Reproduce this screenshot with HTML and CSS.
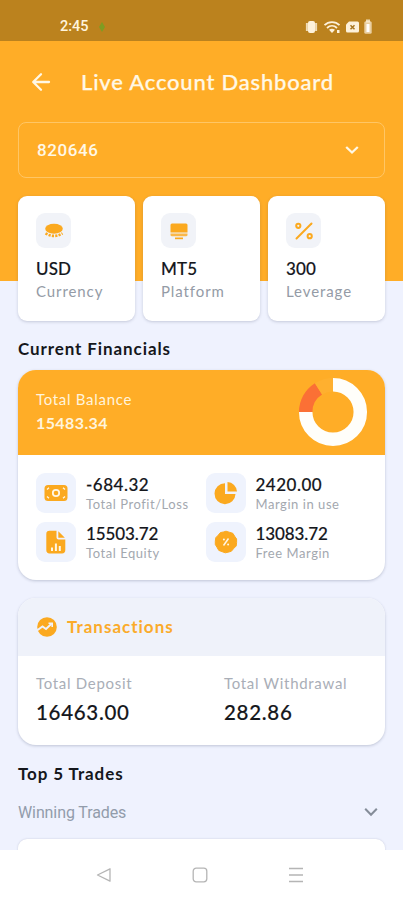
FILE: index.html
```html
<!DOCTYPE html>
<html lang="en">

<head>
  <meta charset="utf-8">
  <meta name="viewport" content="width=device-width, initial-scale=1">
  <title>Live Account Dashboard</title>
  <link rel="stylesheet" href="styles.css">
</head>

<body>
  <div class="screen">
    <div class="status-bar">
      <span class="clock">2:45</span>
      <svg class="leaf" width="8" height="12" viewBox="0 0 8 12"><path d="M4 1L7 6L4 11L1 6Z" fill="#7f9c22"/></svg>
      <!-- vibrate, wifi, sim, battery -->
      <svg class="status-icons" width="68" height="18" viewBox="0 0 68 18" fill="#fdf1da">
        <rect x="3" y="3" width="7" height="12" rx="2"/>
        <path d="M1.900 5V13M11.100 5V13" stroke="#fdf1da" stroke-width="2" opacity=".8"/>
        <g fill="none" stroke="#fdf1da" stroke-width="1.8">
          <path d="M19.5 7.2C23.500 3 30.500 3 34.500 7.200"/>
          <path d="M22 10C25 7.200 29 7.200 32 10"/>
        </g>
        <path d="M24 11.800Q27 9.600 30 11.800L27 15Z"/>
        <rect x="32" y="12" width="2.500" height="3"/>
        <path d="M44 3.500H52.500Q54 3.500 54 5V13Q54 14.500 52.500 14.500H42.500Q41 14.500 41 13V6.500Z"/>
        <path d="M45.500 7.300L49.500 11.300M49.500 7.300L45.500 11.300" stroke="#a9761f" stroke-width="1.500"/>
        <rect x="61" y="1.500" width="4" height="3" opacity=".8"/>
        <rect x="59.300" y="3.300" width="7.400" height="12.400" rx="1.500" opacity=".7"/>
        <rect x="61.500" y="6" width="3" height="8" fill="#fff"/>
      </svg>
    </div>

    <main class="content">
      <header class="title-bar">
        <svg width="20" height="20" viewBox="0 0 20 20" fill="none" stroke="#fff8e6" stroke-width="2.300" stroke-linecap="round" stroke-linejoin="round">
          <path d="M18 10H2.500M10 2.200L2.200 10L10 17.800"/>
        </svg>
        <h1>Live Account Dashboard</h1>
      </header>

      <div class="account-select">
        <span>820646</span>
        <svg width="14" height="10" viewBox="0 0 14 10" fill="none" stroke="#fff8e6" stroke-width="2.300"><path d="M1.200 2L7 7.500L12.800 2"/></svg>
      </div>

      <section class="info-cards">
        <div class="info-card">
          <div class="icon-box">
            <svg width="22" height="20" viewBox="0 0 22 20" fill="#fba91f">
              <ellipse cx="11" cy="7.700" rx="8.800" ry="5"/>
              <path d="M2.500 12.300Q11 17.500 19.500 12.300" fill="none" stroke="#fba91f" stroke-width="2.600" stroke-dasharray="2.200 1.200"/>
            </svg>
          </div>
          <strong>USD</strong>
          <span>Currency</span>
        </div>
        <div class="info-card">
          <div class="icon-box">
            <svg width="22" height="20" viewBox="0 0 22 20" fill="#fba91f">
              <path d="M4 2.500H18Q19.500 2.500 19.500 4V11.500H2.500V4Q2.500 2.500 4 2.500Z"/>
              <path d="M2.500 12.500H19.500V14Q19.500 15.300 18 15.300H4Q2.500 15.300 2.500 14Z" opacity=".8"/>
              <rect x="7" y="16.500" width="8" height="1.700"/>
            </svg>
          </div>
          <strong>MT5</strong>
          <span>Platform</span>
        </div>
        <div class="info-card">
          <div class="icon-box">
            <svg width="22" height="20" viewBox="0 0 22 20" fill="none" stroke="#fba91f" stroke-width="2" stroke-linecap="round">
              <path d="M3.500 17.500L18.500 2.500"/>
              <circle cx="5.300" cy="4.800" r="2.100"/>
              <circle cx="16.700" cy="15.200" r="2.100"/>
            </svg>
          </div>
          <strong>300</strong>
          <span>Leverage</span>
        </div>
      </section>

      <h2 class="financials-heading">Current Financials</h2>

      <section class="card balance-card">
        <div class="balance-head">
          <div class="balance-text">
            <span>Total Balance</span>
            <strong>15483.34</strong>
          </div>
          <!-- ring radius 27.3, segments start at 12 o'clock -->
          <svg class="donut" width="70" height="70" viewBox="0 0 70 70" fill="none" stroke-width="13.500">
            <path d="M35 7.700A27.300 27.300 0 1 1 7.700 35" stroke="#fffefa"/>
            <path d="M7.700 35A27.300 27.300 0 0 1 20.500 11.900" stroke="#fb7035"/>
            <path d="M20.500 11.900A27.300 27.300 0 0 1 35 7.700" stroke="#ffb02f"/>
          </svg>
        </div>
        <div class="stats">
          <div class="stat">
            <div class="icon-box big">
              <svg width="24" height="24" viewBox="0 0 24 24">
                <rect x=".5" y="4" width="23" height="16" rx="3.500" fill="#fba91f"/>
                <circle cx="12" cy="12" r="3.200" fill="none" stroke="#fff6e4" stroke-width="1.800"/>
                <path d="M3 8.500L5 6.800M3 15.500L5 17.200M21 8.500L19 6.800M21 15.500L19 17.200" stroke="#fff6e4" stroke-width="1.300"/>
              </svg>
            </div>
            <div class="stat-text"><strong>-684.32</strong><span>Total Profit/Loss</span></div>
          </div>
          <div class="stat">
            <div class="icon-box big">
              <svg width="24" height="24" viewBox="0 0 24 24" fill="#fba91f">
                <path d="M11 2.200V13H21.500A10.500 10.500 0 1 1 11 2.200Z"/>
                <path d="M13.500 1A10 10 0 0 1 23 10.500H13.500Z"/>
              </svg>
            </div>
            <div class="stat-text"><strong>2420.00</strong><span>Margin in use</span></div>
          </div>
          <div class="stat">
            <div class="icon-box big">
              <svg width="24" height="24" viewBox="0 0 24 24" fill="#fba91f">
                <path d="M5.500 .8H12.500V7.500Q12.500 9.500 14.500 9.500H21.300V20Q21.300 23.400 18 23.400H5.500Q2.300 23.400 2.300 20V4Q2.300 .8 5.500 .8Z"/>
                <path d="M14.300 1.200L20.800 7.800H14.300Z"/>
                <path d="M8 21V17.500M11.900 21V13.500M15.800 21V16" stroke="#fff6e4" stroke-width="2"/>
              </svg>
            </div>
            <div class="stat-text"><strong class="tight">15503.72</strong><span>Total Equity</span></div>
          </div>
          <div class="stat">
            <div class="icon-box big">
              <svg width="24" height="24" viewBox="0 0 24 24">
                <path d="M12 1.200L15.200 2.200L18.800 3.300L20.700 6.300L22.600 9L22.600 12.500L22.200 16L19.700 18.500L17.300 21.300L14 22.200L11.300 22.800L8.200 21.700L4.800 20.400L3 17.300L1.300 14.500L1.300 11.200L1.800 7.700L4.200 5.200L6.400 2.600L9.800 1.900Z" fill="#fba91f" stroke="#fba91f" stroke-linejoin="round"/>
                <path d="M9.500 15.500L14.500 8.500" stroke="#fff6e4" stroke-width="1.500"/>
                <circle cx="9.900" cy="9.600" r="1" fill="#fff6e4"/>
                <circle cx="14.100" cy="14.400" r="1" fill="#fff6e4"/>
              </svg>
            </div>
            <div class="stat-text"><strong class="tight">13083.72</strong><span>Free Margin</span></div>
          </div>
        </div>
      </section>

      <section class="card transactions-card">
        <div class="transactions-head">
          <svg width="20" height="20" viewBox="0 0 20 20">
            <circle cx="10" cy="10" r="9.800" fill="#fba91f"/>
            <path d="M0 13.500L5.500 9.500L9 12L14.500 6.800" fill="none" stroke="#eff2fa" stroke-width="1.900"/>
            <path d="M11.500 6.200H15.200V9.900" fill="none" stroke="#eff2fa" stroke-width="1.600"/>
          </svg>
          <h3>Transactions</h3>
        </div>
        <div class="totals">
          <div class="total"><span>Total Deposit</span><strong>16463.00</strong></div>
          <div class="total"><span>Total Withdrawal</span><strong>282.86</strong></div>
        </div>
      </section>

      <h2 class="trades-heading">Top 5 Trades</h2>
      <div class="trades-select">
        <span>Winning Trades</span>
        <svg width="14" height="10" viewBox="0 0 14 10" fill="none" stroke="#858d99" stroke-width="2"><path d="M1.200 1.800L7 7.800L12.800 1.800"/></svg>
      </div>
      <div class="trades-list"></div>
    </main>

    <nav class="system-nav">
      <svg width="16" height="16" viewBox="0 0 16 16"><path d="M1.500 8L14 1.800V14.200Z"/></svg>
      <svg width="16" height="16" viewBox="0 0 16 16"><rect x="1.200" y="1.200" width="13.600" height="13.600" rx="3"/></svg>
      <svg width="16" height="16" viewBox="0 0 16 16"><path d="M1 1.500H15M1 8H15M1 14.500H15"/></svg>
    </nav>
  </div>
</body>

</html>
```
FILE: styles.css
```css
* {
  box-sizing: border-box;
}

body {
  margin: 0;
  font-family: Lato, "Open Sans", sans-serif;
  color: #15171c;
}

h1, h2, h3 {
  margin: 0;
}

svg {
  display: block;
  flex: none;
}

.screen {
  display: flex;
  flex-direction: column;
  height: 900px;
  overflow: hidden;
  background: linear-gradient(#ffad27 281px, #eff2fe 281px);
}

.status-bar {
  display: flex;
  flex: none;
  align-items: center;
  height: 41px;
  padding: 12px 30px 0 60px;
  background: #bb821e;
}

.clock {
  width: 38px;
  color: #fff4dc;
  font: 500 14.5px Roboto, sans-serif;
}

.status-icons {
  margin-left: auto;
}

.content {
  flex: 1;
  min-height: 0;
  padding: 0 18px;
  overflow: hidden;
}

.title-bar {
  display: flex;
  align-items: center;
  gap: 30px;
  height: 81px;
  padding: 0 0 0 13px;
}

.title-bar h1 {
  color: #fff8e6;
  font-size: 22px;
  font-weight: 500;
  letter-spacing: 0.8px;
  white-space: nowrap;
  -webkit-text-stroke: 0.25px;
}

.account-select {
  display: flex;
  align-items: center;
  justify-content: space-between;
  height: 56px;
  padding: 0 25px 0 18px;
  border: 1px solid #ffc665;
  border-radius: 8px;
  color: #fff8e6;
  font: 500 17px Roboto, sans-serif;
  letter-spacing: 0.6px;
}

.info-cards {
  display: grid;
  grid-template-columns: repeat(3, 1fr);
  gap: 8px;
  margin-top: 18px;
}

.info-card {
  display: flex;
  flex-direction: column;
  height: 125px;
  padding: 17px 18px 0;
  border-radius: 9px;
  background: #fff;
  box-shadow: 0 1px 3px rgba(70, 80, 110, 0.25);
}

.icon-box {
  display: flex;
  align-items: center;
  justify-content: center;
  width: 35px;
  height: 35px;
  border-radius: 9px;
  background: #f1f3f8;
}

.icon-box.big {
  flex: none;
  width: 40px;
  height: 40px;
  background: #eff3fd;
}

/* Lato has no medium weight here, a thin stroke stands in for it */
.info-card strong,
.stat-text strong,
.total strong {
  font-weight: 500;
  -webkit-text-stroke: 0.15px;
}

.info-card strong {
  margin-top: 9px;
  font-size: 17px;
  line-height: 23px;
  letter-spacing: 0.1px;
}

.info-card span {
  color: #949ba6;
  font-size: 15px;
  line-height: 23px;
  letter-spacing: 0.9px;
}

h2 {
  font-size: 17px;
  font-weight: 700;
  line-height: 24px;
  letter-spacing: 0.9px;
}

.financials-heading {
  margin-top: 16px;
}

.card {
  overflow: hidden;
  border-radius: 18px;
  background: #fff;
  box-shadow: 0 1px 3px rgba(70, 80, 110, 0.28);
}

.balance-card {
  height: 210px;
  margin-top: 9px;
}

.balance-head {
  display: flex;
  align-items: center;
  justify-content: space-between;
  height: 85px;
  padding: 0 17px 2px 18px;
  background: #ffad27;
  color: #fff4dc;
}

.balance-text {
  display: flex;
  flex-direction: column;
  padding-bottom: 2px;
  line-height: 24px;
}

.balance-text span {
  font-size: 15px;
  letter-spacing: 0.7px;
}

.balance-text strong {
  font-size: 16px;
  letter-spacing: 0.4px;
}

.stats {
  display: grid;
  grid-template-columns: 169.500px 1fr;
  gap: 9px 0;
  padding: 18px 18px 0;
}

.stat {
  display: flex;
  gap: 10px;
}

.stat-text {
  display: flex;
  flex-direction: column;
  white-space: nowrap;
}

.stat-text strong {
  font-size: 17px;
  line-height: 23px;
  letter-spacing: 0.5px;
}

.stat-text strong.tight {
  letter-spacing: -0.1px;
}

.stat-text span {
  color: #a3a8af;
  font-size: 13px;
  line-height: 16px;
  letter-spacing: 0.55px;
}

.transactions-card {
  height: 147px;
  margin-top: 18px;
}

.transactions-head {
  display: flex;
  align-items: center;
  gap: 10px;
  height: 58px;
  padding-left: 19px;
  background: #eff2fa;
}

.transactions-head h3 {
  padding-bottom: 1px;
  color: #fbab2a;
  font-size: 17px;
  letter-spacing: 1px;
}

.totals {
  display: grid;
  grid-template-columns: 188px 1fr;
  padding: 14px 0 0 18px;
}

.total {
  display: flex;
  flex-direction: column;
}

.total span {
  color: #a9aeb7;
  font-size: 15px;
  line-height: 26px;
  letter-spacing: 0.7px;
}

.total strong {
  font-size: 20.5px;
  line-height: 32px;
  letter-spacing: 0.7px;
}

.trades-heading {
  margin-top: 17px;
}

.trades-select {
  display: flex;
  align-items: center;
  justify-content: space-between;
  height: 24px;
  margin-top: 14px;
  padding-right: 7px;
  color: #929cab;
  font: 400 16px Roboto, sans-serif;
  letter-spacing: -0.1px;
}

.trades-list {
  height: 60px;
  margin-top: 15px;
  border-radius: 9px;
  background: #fff;
  box-shadow: 0 0 2px rgba(70, 80, 110, 0.25);
}

.system-nav {
  display: flex;
  flex: none;
  justify-content: center;
  gap: 80px;
  height: 50px;
  padding: 17px 4px 0 0;
  background: #fff;
}

.system-nav svg {
  fill: none;
  stroke: #b5b5b5;
  stroke-width: 1.3;
  stroke-linejoin: round;
}
```
